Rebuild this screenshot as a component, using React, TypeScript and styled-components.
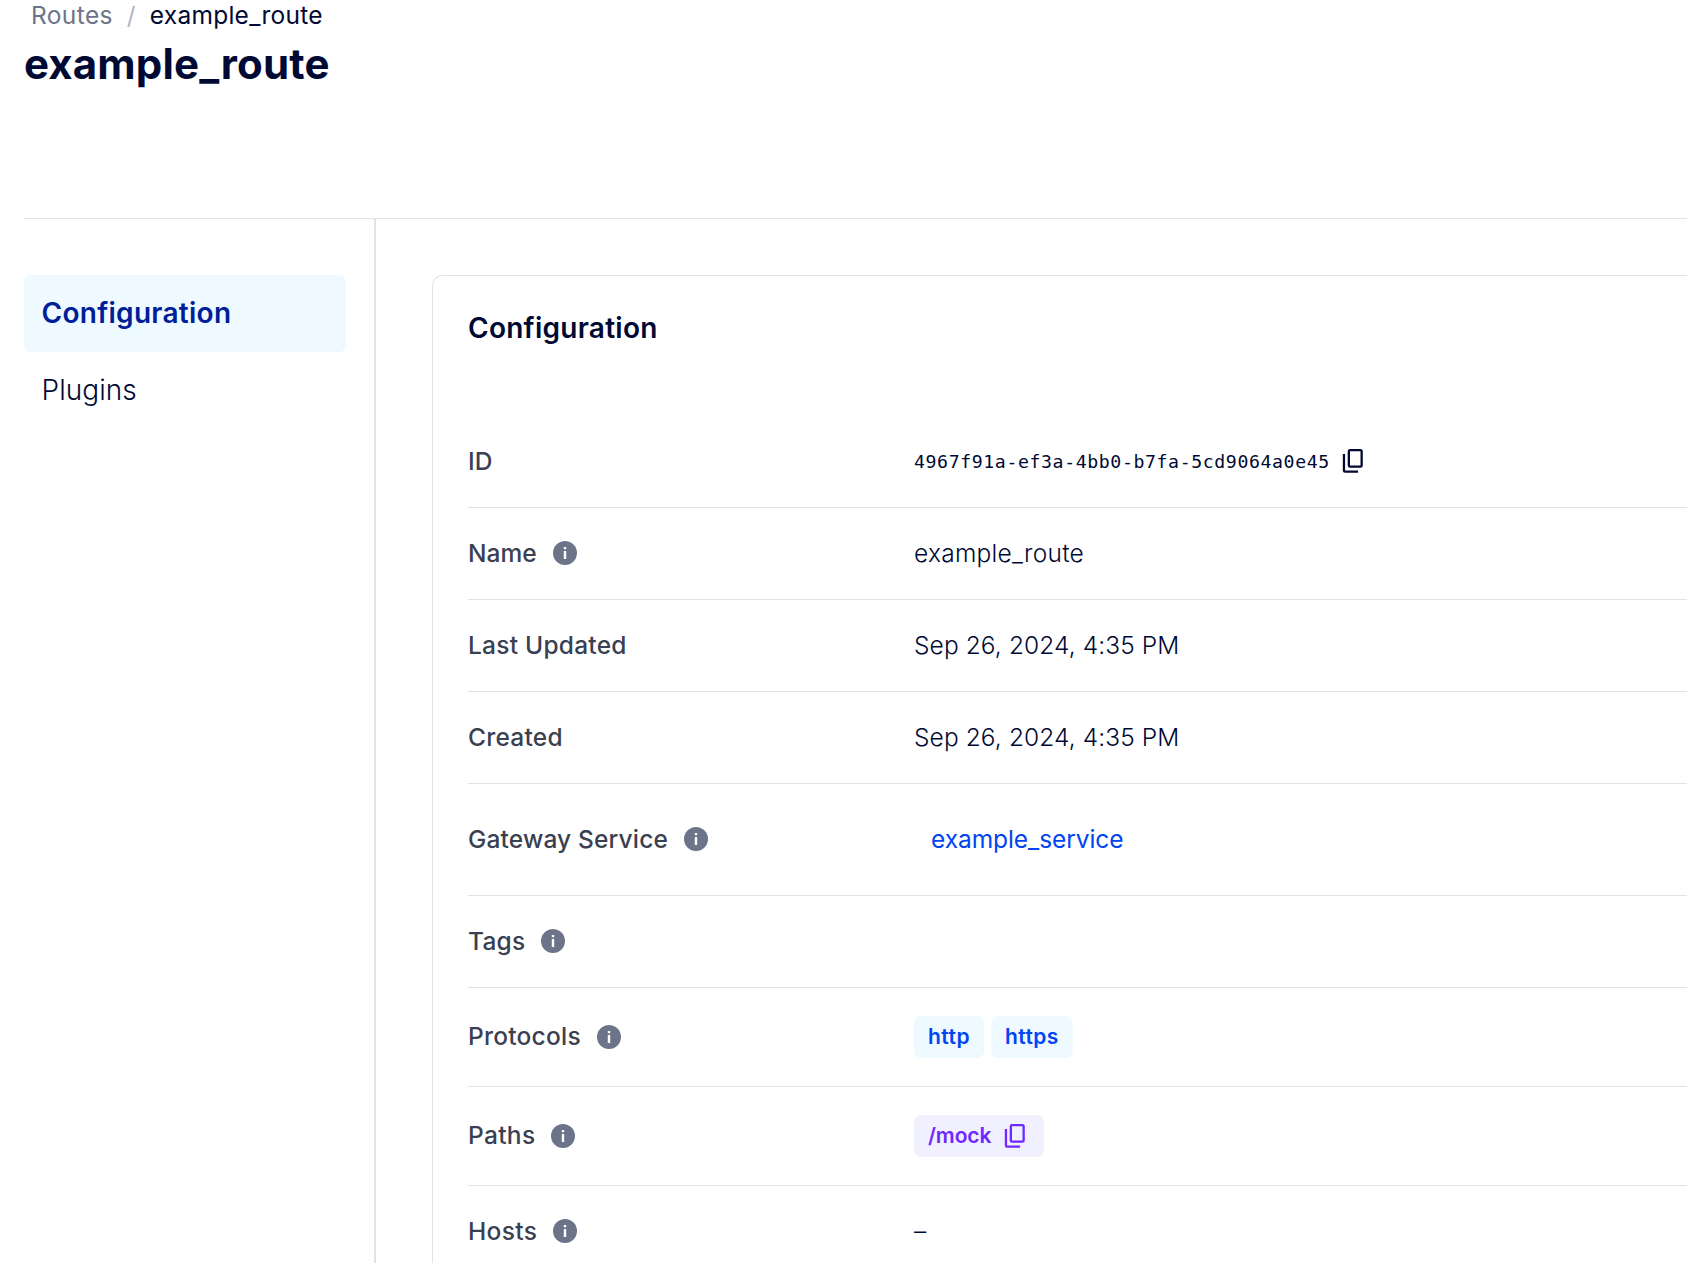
import React from "react";
import styled, { createGlobalStyle } from "styled-components";

const GlobalStyle = createGlobalStyle`
  * { box-sizing: border-box; }
  body {
    margin: 0;
    background: #fff;
    color: #000933;
    font-family: Inter, Roboto, sans-serif;
    font-size: 24.5px;
    overflow: hidden;
  }
`;

const Page = styled.div`
  display: flex;
  flex-direction: column;
  height: 1263px;
  padding-left: 24px;
  overflow: hidden;
`;

const Header = styled.header`
  flex: none;
  height: 219px;
  border-bottom: 1px solid #e0e4ea;
`;

const Breadcrumbs = styled.nav`
  display: flex;
  height: 32px;
  padding-left: 7px;
  letter-spacing: 0.25px;
  line-height: 31px;
  white-space: nowrap;
`;

const Crumb = styled.span<{ $muted?: boolean }>`
  color: ${(p) => (p.$muted ? "#6c7489" : "#000933")};
  letter-spacing: ${(p) => (p.$muted ? 0.38 : 0.25)}px;
`;

const CrumbDivider = styled.span`
  width: 37px;
  color: #afb7c5;
  text-align: center;
`;

const Title = styled.h1`
  margin: 4px 0 0;
  font-size: 42px;
  font-weight: 700;
  letter-spacing: 0.17px;
  line-height: 56px;
`;

const Body = styled.div`
  display: flex;
  flex: 1;
  min-height: 0;
`;

const Sidebar = styled.nav`
  flex: none;
  width: 352px;
  padding: 56px 28px 0 0;
  border-right: 2px solid #e0e4ea;
`;

const NavItem = styled.a<{ $active?: boolean }>`
  display: flex;
  align-items: center;
  height: 77px;
  padding: 0 17.5px 1px;
  border-radius: 7px;
  background: ${(p) => (p.$active ? "#eefaff" : "transparent")};
  color: ${(p) => (p.$active ? "#001e99" : "#000933")};
  font-size: 28px;
  font-weight: ${(p) => (p.$active ? 600 : 300)};
  letter-spacing: ${(p) => (p.$active ? "0.28px" : "0.05px")};
`;

const Main = styled.main`
  flex: 1;
  min-width: 0;
  padding: 56px 0 0 56px;
`;

const Card = styled.section`
  height: 1400px;
  padding: 0 0 0 35px;
  border: 1px solid #e0e4ea;
  border-right: 0;
  border-radius: 10px 0 0 0;
`;

const CardTitle = styled.h2`
  height: 140px;
  margin: 0;
  padding-top: 31px;
  font-size: 28px;
  font-weight: 600;
  letter-spacing: 0.27px;
  line-height: 42px;
`;

const Row = styled.div<{ $height: number }>`
  display: grid;
  grid-template-columns: 446px 1fr;
  align-items: center;
  height: ${(p) => p.$height}px;
  padding-bottom: ${(p) => (p.$height % 2 === 0 ? 1 : 0)}px;
  border-bottom: 1px solid #e0e4ea;
`;

const Label = styled.div`
  display: flex;
  align-items: center;
  gap: 16px;
  color: #3a3f51;
  font-weight: 500;
`;

const LabelText = styled.span<{ $tracking: number; $raised: boolean }>`
  padding-bottom: ${(p) => (p.$raised ? 2 : 0)}px;
  letter-spacing: ${(p) => p.$tracking}px;
`;

const Value = styled.div<{ $tracking?: number }>`
  display: flex;
  align-items: center;
  gap: 7px;
  font-weight: 300;
  letter-spacing: ${(p) => p.$tracking ?? 0}px;
  white-space: nowrap;
`;

const Uuid = styled.span`
  margin-right: 5.5px;
  font-family: "DejaVu Sans Mono", monospace;
  font-size: 18.2px;
  font-weight: 400;
  letter-spacing: 0.6px;
`;

const ServiceLink = styled.a`
  padding-left: 17px;
  color: #0044f4;
  font-weight: 400;
`;

const Badge = styled.span<{ $tone: "info" | "path" }>`
  display: flex;
  align-items: center;
  gap: ${(p) => (p.$tone === "info" ? 0 : 12.5)}px;
  height: 42px;
  padding: ${(p) => (p.$tone === "info" ? "0 14px 1px" : "0 16px 1px 14px")};
  border-radius: 7px;
  background: ${(p) => (p.$tone === "info" ? "#eefaff" : "#f1f0ff")};
  color: ${(p) => (p.$tone === "info" ? "#0044f4" : "#6f28ff")};
  font-size: 21px;
  font-weight: 600;
  letter-spacing: ${(p) => (p.$tone === "info" ? 0.45 : -0.1)}px;
`;

const Icon = styled.svg`
  display: block;
  flex: none;
`;

const InfoIcon = () => (
  <Icon width="24" height="24" viewBox="0 0 24 24">
    <circle cx="12" cy="12" r="12" fill="#6c7489" />
    <path d="M10.8 6h2.4v2.2h-2.4zM10.8 10h2.4v8h-2.4z" fill="#fff" />
  </Icon>
);

const CopyIcon = () => (
  <Icon width="24" height="26" viewBox="1 1 24 26" fill="currentColor">
    <path
      fillRule="evenodd"
      d="M9 2h10.500a2.300 2.300 0 0 1 2.300 2.300v14.200a2.300 2.300 0 0 1-2.300 2.300H9a2.300 2.300 0 0 1-2.300-2.300V4.300A2.300 2.300 0 0 1 9 2zm0 2.300v14.200h10.500V4.300z"
    />
    <path d="M1.800 7h2.300v16.500h13v2.300h-13a2.300 2.300 0 0 1-2.300-2.300z" />
  </Icon>
);

type RowData = {
  label: string;
  info?: boolean;
  height?: number;
  labelTracking?: number;
  valueTracking?: number;
  value?: React.ReactNode;
};

const rows: RowData[] = [
  {
    label: "ID",
    labelTracking: 0,
    value: <><Uuid>4967f91a-ef3a-4bb0-b7fa-5cd9064a0e45</Uuid><CopyIcon /></>,
  },
  { label: "Name", info: true, labelTracking: 0, valueTracking: 0.26, value: "example_route" },
  { label: "Last Updated", valueTracking: 0.1, value: "Sep 26, 2024, 4:35 PM" },
  { label: "Created", valueTracking: 0.1, value: "Sep 26, 2024, 4:35 PM" },
  {
    label: "Gateway Service",
    info: true,
    height: 112,
    labelTracking: 0.16,
    valueTracking: -0.07,
    value: <ServiceLink>example_service</ServiceLink>,
  },
  { label: "Tags", info: true },
  {
    label: "Protocols",
    info: true,
    height: 99,
    value: <><Badge $tone="info">http</Badge><Badge $tone="info">https</Badge></>,
  },
  {
    label: "Paths",
    info: true,
    height: 99,
    labelTracking: 0.32,
    value: <Badge $tone="path">/mock<CopyIcon /></Badge>,
  },
  { label: "Hosts", info: true, labelTracking: 0.32, value: "–" },
];

export default function App() {
  return (
    <>
      <GlobalStyle />
      <Page>
        <Header>
          <Breadcrumbs>
            <Crumb $muted>Routes</Crumb>
            <CrumbDivider>/</CrumbDivider>
            <Crumb>example_route</Crumb>
          </Breadcrumbs>
          <Title>example_route</Title>
        </Header>
        <Body>
          <Sidebar>
            <NavItem $active>Configuration</NavItem>
            <NavItem>Plugins</NavItem>
          </Sidebar>
          <Main>
            <Card>
              <CardTitle>Configuration</CardTitle>
              {rows.map((row) => (
                <Row key={row.label} $height={row.height ?? 92}>
                  <Label>
                    <LabelText $tracking={row.labelTracking ?? 0.24} $raised={row.height === 99}>
                      {row.label}
                    </LabelText>
                    {row.info && <InfoIcon />}
                  </Label>
                  <Value $tracking={row.valueTracking}>{row.value}</Value>
                </Row>
              ))}
            </Card>
          </Main>
        </Body>
      </Page>
    </>
  );
}
